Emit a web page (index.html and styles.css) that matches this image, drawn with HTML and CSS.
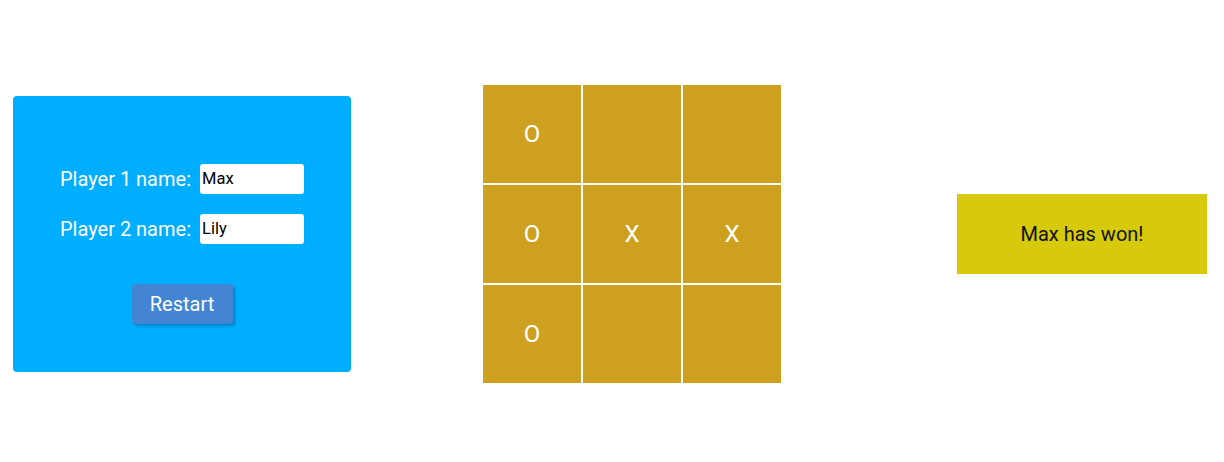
FILE: index.html
```html
<!DOCTYPE html>
<html>
<head>
<meta charset="utf-8">
<link rel="stylesheet" href="styles.css">
</head>
<body>
<main class="page">
  <section class="panel">
    <div class="field">
      <label class="label">Player 1 name:</label>
      <input class="input" type="text" value="Max">
    </div>
    <div class="field">
      <label class="label">Player 2 name:</label>
      <input class="input" type="text" value="Lily">
    </div>
    <button class="restart">Restart</button>
  </section>
  <section class="board">
    <div class="cell">O</div>
    <div class="cell"></div>
    <div class="cell"></div>
    <div class="cell">O</div>
    <div class="cell">X</div>
    <div class="cell">X</div>
    <div class="cell">O</div>
    <div class="cell"></div>
    <div class="cell"></div>
  </section>
  <section class="message">Max has won!</section>
</main>
</body>
</html>
```

FILE: styles.css
```css
* { box-sizing: border-box; }
html, body { margin: 0; padding: 0; background: #ffffff; }
body { font-family: Roboto, "Liberation Sans", Arial, sans-serif; }

.page {
  display: flex;
  align-items: center;
  height: 462px;
  padding: 5px 0 0 13px;
}

.panel {
  width: 338px;
  height: 276px;
  background: #00aeff;
  border-radius: 4px;
  display: flex;
  flex-direction: column;
  align-items: center;
  padding-top: 68px;
}

.field {
  display: flex;
  align-items: center;
  gap: 9px;
  margin-bottom: 20px;
}

.label {
  color: #ffffff;
  font-size: 20px;
}

.input {
  width: 104px;
  height: 30px;
  border: none;
  border-radius: 3px;
  background: #ffffff;
  padding: 0 2px;
  font-family: Roboto, "Liberation Sans", Arial, sans-serif;
  font-size: 16.5px;
  color: #000000;
  outline: none;
}

.restart {
  margin-top: 20px;
  width: 101px;
  height: 40px;
  border: none;
  border-radius: 3px;
  background: #4385d3;
  color: #ffffff;
  font-family: Roboto, "Liberation Sans", Arial, sans-serif;
  font-size: 20px;
  box-shadow: 2px 2px 3px rgba(0, 0, 0, 0.25);
  padding: 0;
}

.board {
  margin-left: 132px;
  display: grid;
  grid-template-columns: repeat(3, 98px);
  grid-template-rows: repeat(3, 98px);
  gap: 2px;
  background: #ffffff;
}

.cell {
  background: #cda020;
  color: #ffffff;
  font-size: 24px;
  display: flex;
  align-items: center;
  justify-content: center;
}

.message {
  margin-left: 176px;
  width: 250px;
  height: 80px;
  background: #d7c90c;
  color: #111111;
  font-size: 20px;
  display: flex;
  align-items: center;
  justify-content: center;
}
```
